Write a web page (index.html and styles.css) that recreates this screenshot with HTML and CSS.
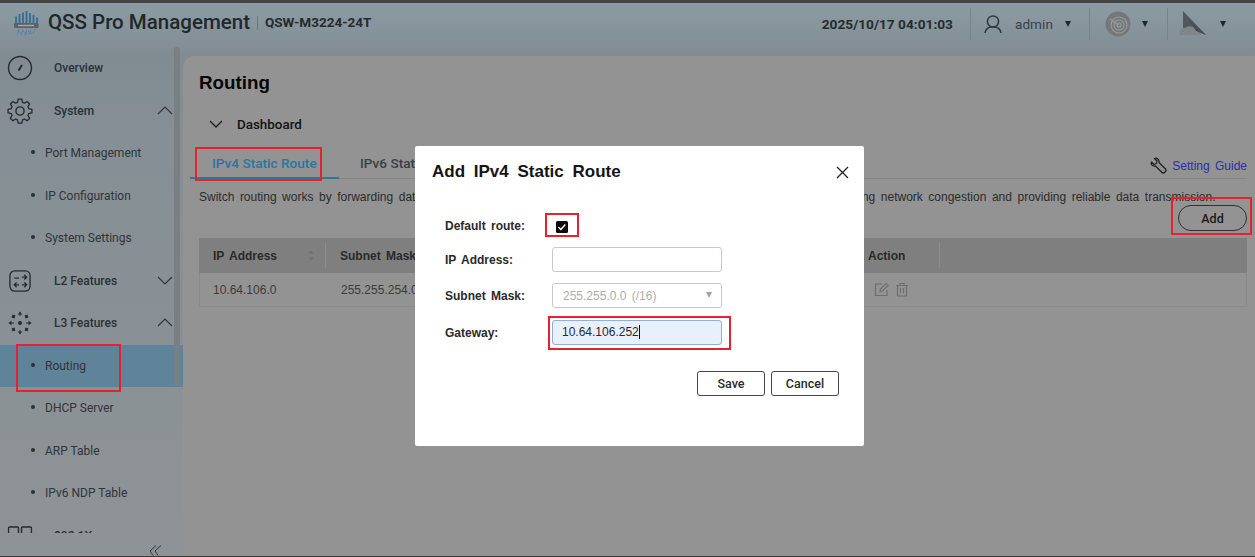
FILE: index.html
```html
<!DOCTYPE html>
<html lang="en">
<head>
<meta charset="utf-8">
<title>QSS Pro Management</title>
<link rel="stylesheet" href="styles.css">
</head>
<body>
<div class="strip"></div>
<header class="topbar">
  <svg class="logo" width="26" height="26" viewBox="0 0 26 26">
    <g stroke="#2c6c95" stroke-width="1.700">
      <path d="M3 6.500V14M6.500 4V14M10 2.500V14M13.500 1V14M17 3V14M20.500 5V14M24 7.500V14"/>
    </g>
    <rect x="1" y="13" width="24.500" height="5" rx="1.200" fill="#5b6367"/>
    <rect x="5" y="14.800" width="16" height="1.400" fill="#a3a9ac"/>
    <path d="M6 19.500l-2 5M10 19.500l-2 6M14 19.500l-2 6M18 19.500l-2 5M22 19.500l-2 4M5 21l4 3M10 21l4 3M15 21l4 3" stroke="#4a83ab" stroke-width=".9"/>
  </svg>
  <span class="brand">QSS Pro Management</span>
  <span class="brand-sep"></span>
  <span class="model">QSW-M3224-24T</span>
  <div class="top-right">
    <span class="clock">2025/10/17 04:01:03</span>
    <span class="top-sep"></span>
    <svg class="user-icon" width="20" height="20" viewBox="0 0 20 20" fill="none" stroke="#30373c" stroke-width="1.500">
      <circle cx="10" cy="7.500" r="5.600"/>
      <path d="M2 19c.6-4 3.400-6.200 8-6.200s7.400 2.200 8 6.200"/>
    </svg>
    <span class="admin">admin</span>
    <span class="caret caret-a"></span>
    <span class="top-sep"></span>
    <svg class="radar" width="26" height="26" viewBox="0 0 26 26">
      <circle cx="13" cy="13" r="12.500" fill="#74787a"/>
      <g fill="none" stroke="#9a9c9c" stroke-width="1.100">
        <circle cx="14" cy="14" r="8"/>
        <circle cx="14" cy="14" r="5"/>
        <circle cx="14" cy="14" r="2"/>
        <path d="M5 8l9 6"/>
      </g>
    </svg>
    <span class="caret caret-b"></span>
    <span class="top-sep"></span>
    <svg class="sail" width="28" height="26" viewBox="0 0 28 26">
      <path d="M4 0L27 24 12 17 4 17z" fill="#50585d"/>
      <path d="M1 24c-2-4 1-8 5-7 3-3 9-2 11 1 3 0 5 3 5 6z" fill="#7f8589"/>
      <path d="M10 9L27 24 17 20z" fill="#454c50"/>
    </svg>
    <span class="caret caret-c"></span>
  </div>
</header>
<div class="shell">
  <aside class="sidebar">
    <nav class="nav">
      <a class="nav-item">
        <svg class="nav-icon" width="26" height="26" viewBox="0 0 26 26" fill="none" stroke="#262b2e" stroke-width="1.400">
          <circle cx="13" cy="13" r="11.500"/>
          <path d="M11.500 15.500L15 10" stroke-width="2"/>
        </svg>
        <span>Overview</span>
      </a>
      <a class="nav-item">
        <svg class="nav-icon" width="28" height="28" viewBox="0 0 24 24" fill="none" stroke="#262b2e" stroke-width="1.200" stroke-linejoin="round">
          <circle cx="12" cy="12" r="3.500"/>
          <path d="M10.300 2.500h3.400l.6 2.900 1.800.8 2.500-1.600 2.400 2.400-1.600 2.500.8 1.800 2.900.6v3.400l-2.900.6-.8 1.800 1.600 2.500-2.400 2.400-2.500-1.600-1.800.8-.6 2.900h-3.400l-.6-2.900-1.800-.8-2.500 1.600-2.400-2.400 1.600-2.500-.8-1.800-2.900-.6v-3.400l2.900-.6.800-1.800-1.600-2.500 2.400-2.400 2.500 1.600 1.800-.8z" transform="translate(12 12) scale(.92) translate(-12 -13.500)"/>
        </svg>
        <span>System</span>
        <svg class="chev" width="16" height="9" viewBox="0 0 16 9" fill="none" stroke="#30363a" stroke-width="1.200"><path d="M1 8l7-7 7 7"/></svg>
      </a>
      <a class="nav-sub">Port Management</a>
      <a class="nav-sub">IP Configuration</a>
      <a class="nav-sub">System Settings</a>
      <a class="nav-item">
        <svg class="nav-icon" width="23" height="23" viewBox="0 0 24 24" fill="none" stroke="#262b2e" stroke-width="1.400">
          <rect x="1.500" y="1.500" width="21" height="21" rx="5"/>
          <path d="M6 9h5M14 8h5M16.500 5.500l2.500 2.500-2.500 2.500M6 16h5M8.500 13.500L6 16l2.500 2.500M14 16h5M16.500 13.500l2.500 2.500-2.500 2.500" stroke-width="1.300"/>
        </svg>
        <span>L2 Features</span>
        <svg class="chev" width="16" height="9" viewBox="0 0 16 9" fill="none" stroke="#30363a" stroke-width="1.200"><path d="M1 1l7 7 7-7"/></svg>
      </a>
      <a class="nav-item">
        <svg class="nav-icon" width="24" height="24" viewBox="0 0 24 24" fill="#262b2e">
          <circle cx="12" cy="12" r="2"/>
          <path d="M12 .5l2.200 3h-4.400zM12 23.500l-2.200-3h4.400zM.5 12l3-2.200v4.400zM23.500 12l-3 2.200V9.800z"/>
          <rect x="4" y="4" width="3" height="3" transform="rotate(20 5.500 5.500)"/>
          <rect x="17" y="4" width="3" height="3" transform="rotate(-20 18.500 5.500)"/>
          <rect x="4" y="17" width="3" height="3" transform="rotate(-20 5.500 18.500)"/>
          <rect x="17" y="17" width="3" height="3" transform="rotate(20 18.500 18.500)"/>
          <path d="M3 12h3M18 12h3M12 3v2M12 19v2" stroke="#262b2e"/>
        </svg>
        <span>L3 Features</span>
        <svg class="chev" width="16" height="9" viewBox="0 0 16 9" fill="none" stroke="#30363a" stroke-width="1.200"><path d="M1 8l7-7 7 7"/></svg>
      </a>
      <a class="nav-sub is-active">Routing</a>
      <a class="nav-sub">DHCP Server</a>
      <a class="nav-sub">ARP Table</a>
      <a class="nav-sub">IPv6 NDP Table</a>
      <a class="nav-item">
        <svg class="nav-icon" width="25" height="20" viewBox="0 0 25 20" fill="none" stroke="#262b2e" stroke-width="1.400">
          <rect x="1" y="1" width="10" height="16" rx="1"/>
          <rect x="14" y="1" width="10" height="16" rx="1"/>
        </svg>
        <span>802.1X</span>
      </a>
    </nav>
    <div class="scroll-thumb"></div>
    <div class="collapse">
      <svg width="13" height="11" viewBox="0 0 13 11" fill="none" stroke="#30363a" stroke-width="1"><path d="M7 .5L1 6l3 4.500M12 .5L6 6l3 4.500"/></svg>
    </div>
  </aside>
  <main class="panel">
    <h1 class="page-title">Routing</h1>
    <div class="dash">
      <svg width="14" height="8" viewBox="0 0 14 8" fill="none" stroke="#1c1c1c" stroke-width="1.300"><path d="M1 1l6 6 6-6"/></svg>
      <span>Dashboard</span>
    </div>
    <div class="tabs">
      <span class="tab is-on">IPv4 Static Route</span>
      <span class="tab">IPv6 Static Route</span>
      <span class="guide">
        <svg width="17" height="17" viewBox="0 0 17 17" fill="none" stroke="#1c1c1c" stroke-width="1.200" stroke-linejoin="round"><path d="M1.500 5L4 7.500 6.500 6.500 7 4 4.500 1.500C7 .5 9.500 2.500 9 5.500L15.500 12C16.500 13 15.500 14.500 15 15 14.500 15.500 13 16.500 12 15.500L5.500 9C2.500 9.500 .5 7.500 1.500 5Z"/></svg>
        <span class="guide-text">Setting Guide</span>
      </span>
    </div>
    <p class="desc">Switch routing works by forwarding data packets between different network segments, improving network speed, reducing network congestion and providing reliable data transmission.</p>
    <div class="actions"><button class="add-btn">Add</button></div>
    <div class="table">
      <div class="thead">
        <span class="cell c-ip">IP Address<svg class="sort" width="6" height="11" viewBox="0 0 6 11" fill="#6f6f6f"><path d="M3 0l2.500 3.500h-5zM3 11L.5 7.500h5z"/></svg></span>
        <span class="cell c-mask">Subnet Mask</span>
        <span class="cell c-gw">Gateway</span>
        <span class="cell c-act">Action</span>
        <span class="cell c-end"></span>
      </div>
      <div class="trow">
        <span class="cell c-ip">10.64.106.0</span>
        <span class="cell c-mask">255.255.254.0</span>
        <span class="cell c-gw">10.64.106.1</span>
        <span class="cell c-act">
          <svg width="15" height="15" viewBox="0 0 15 15" fill="none" stroke="#6e6e6e" stroke-width="1.200"><path d="M13 8v5.500H1.500V2H8M6 9.500l.5-2.500L12 1.500l2 2L8.500 9z"/></svg>
          <svg width="14" height="15" viewBox="0 0 14 15" fill="none" stroke="#6e6e6e" stroke-width="1.200"><path d="M1 3.500h12M5 3V1.500h4V3M2.500 3.500V14h9V3.500M5.500 6v5M8.500 6v5"/></svg>
        </span>
        <span class="cell c-end"></span>
      </div>
    </div>
  </main>
</div>
<section class="modal">
  <div class="modal-head">
    <h2 class="modal-title">Add IPv4 Static Route</h2>
    <svg width="13" height="13" viewBox="0 0 13 13" fill="none" stroke="#222" stroke-width="1.300"><path d="M1 1l11 11M12 1L1 12"/></svg>
  </div>
  <div class="form">
    <label class="f-label">Default route:</label>
    <span class="checkbox">
      <svg width="12" height="12" viewBox="0 0 12 12"><rect width="12" height="12" rx="1.500" fill="#0b0b0b"/><path d="M2.500 6.200l2.400 2.300 4.400-5" fill="none" stroke="#fff" stroke-width="1.500"/></svg>
    </span>
    <label class="f-label">IP Address:</label>
    <span class="field"></span>
    <label class="f-label">Subnet Mask:</label>
    <span class="field is-select">255.255.0.0 (/16)<i class="sel-caret"></i></span>
    <label class="f-label">Gateway:</label>
    <span class="field is-focus">10.64.106.252<i class="text-cursor"></i></span>
  </div>
  <div class="modal-foot">
    <button class="m-btn">Save</button>
    <button class="m-btn">Cancel</button>
  </div>
</section>
<div class="mark mark-tab"></div>
<div class="mark mark-nav"></div>
<div class="mark mark-add"></div>
<div class="mark mark-check"></div>
<div class="mark mark-gw"></div>
</body>
</html>
```

FILE: styles.css
```css
* { box-sizing: border-box; }
html, body { margin: 0; height: 100%; }
body {
  width: 1255px;
  height: 557px;
  overflow: hidden;
  position: relative;
  display: flex;
  flex-direction: column;
  font-family: Roboto, "Liberation Sans", sans-serif;
  color: #262b2e;
  background: linear-gradient(180deg, #8d9ca5 0, #818c92 55px, #858f95 130px, #8e9396 557px);
  border-bottom: 1px solid #3c3c3c;
}
.strip { height: 3px; background: #444; flex: none; }

/* header */
.topbar { height: 44px; flex: none; display: flex; align-items: center; padding: 0 0 6px 13px; }
.logo { flex: none; margin-top: 2px; }
.brand { margin-left: 9px; font-size: 20.500px; font-weight: 500; color: #21272b; white-space: nowrap; }
.brand-sep { width: 1px; height: 14px; background: #6d7980; margin: 2px 7px 0 7px; }
.model { font-size: 13.500px; font-weight: 700; color: #262b2e; white-space: nowrap; }
.top-right { margin-left: auto; display: flex; align-items: center; height: 32px; margin-top: 4px; }
.clock { font-size: 13.700px; font-weight: 700; color: #262b2e; margin-right: 17px; white-space: nowrap; }
.top-sep { width: 1px; height: 32px; background: #76838b; }
.user-icon { margin-left: 12px; }
.admin { margin-left: 12px; font-size: 13.500px; color: #3a4146; letter-spacing: .1px; }
.caret { width: 0; height: 0; border-left: 3.500px solid transparent; border-right: 3.500px solid transparent; border-top: 6px solid #20262a; }
.caret-a { margin: 0 18.500px 0 11.500px; }
.radar { margin-left: 15px; filter: blur(.6px); }
.caret-b { margin: 0 19.500px 0 10.500px; }
.sail { margin-left: 11px; }
.caret-c { margin: 0 29.500px 0 12.500px; }

/* shell */
.shell { flex: 1; min-height: 0; display: flex; }
.sidebar { width: 183px; flex: none; position: relative; display: flex; flex-direction: column; }
.nav { flex: 1; min-height: 0; overflow: hidden; display: grid; grid-auto-rows: 42.500px; align-content: start; }
.nav-item, .nav-sub { display: flex; align-items: center; font-size: 12px; font-weight: 500; color: #2b3135; white-space: nowrap; }
.nav-item { position: relative; padding-left: 54px; }
.nav-icon { position: absolute; left: 20px; top: 50%; transform: translate(-50%, -50%); }
.chev { position: absolute; left: 157px; top: 50%; margin-top: -5px; }
.nav-sub { padding-left: 45px; position: relative; font-weight: 400; color: #2f3539; }
.nav-sub::before { content: ""; position: absolute; left: 31px; top: 50%; width: 4px; height: 4px; margin-top: -3px; border-radius: 50%; background: #2b3135; }
.nav-sub.is-active { background: #5f8399; }
.scroll-thumb { position: absolute; left: 174px; top: 0; width: 6px; height: 339px; border-radius: 3px; background: #797f83; }
.collapse { height: 23px; flex: none; display: flex; align-items: flex-end; justify-content: flex-end; padding: 0 21px 0 0; }

/* panel */
.panel { flex: 1; min-width: 0; margin-top: 9px; background: #939393; border-top-left-radius: 12px; padding: 0 8px 0 16px; display: flex; flex-direction: column; }
.page-title { margin: 16px 0 0; font: 700 18.800px/22px "Liberation Sans", sans-serif; color: #050505; }
.dash { display: flex; align-items: center; gap: 14px; margin: 22px 0 0 10px; height: 16px; font-size: 13.400px; font-weight: 500; color: #121212; }
.tabs { margin: 17px 0 0 -9px; height: 30px; display: flex; align-items: center; border-bottom: 1px solid #868686; }
.tab { font-size: 13.600px; font-weight: 500; color: #3a3f42; padding-left: 21px; width: 170px; white-space: nowrap; height: 30px; line-height: 28px; overflow: hidden; }
.tab.is-on { color: #2a76a1; width: 149px; padding-left: 22px; border-bottom: 2px solid #2a76a1; }
.guide { margin: 4px 0 0 auto; display: flex; align-items: center; gap: 5px; }
.guide-text { font: 12px "Liberation Sans", sans-serif; word-spacing: 2px; color: #2a2fae; white-space: nowrap; }
.desc { margin: 11px 0 0; font: 12px/15px "Liberation Sans", sans-serif; word-spacing: 2.200px; color: #2b2b2b; white-space: nowrap; }
.actions { display: flex; justify-content: flex-end; height: 33px; }
.add-btn { width: 69px; height: 26px; border: 1px solid #303030; border-radius: 13px; background: transparent; font: 500 12.500px Roboto, sans-serif; color: #1a1a1a; padding: 0; }
.table { font: 12px "Liberation Sans", sans-serif; }
.thead, .trow { display: grid; grid-template-columns: 127px 200px 328px 86px 1fr; }
.thead { height: 35px; background: #7f7f7f; font-weight: 700; word-spacing: 2px; color: #2a2a2a; }
.trow { height: 34px; border: 1px solid #8a8a8a; border-top: 0; color: #3c3c3c; }
.cell { display: flex; align-items: center; padding-left: 14px; position: relative; white-space: nowrap; }
.trow .c-ip { padding-left: 13px; }
.thead .cell::after { content: ""; position: absolute; right: 0; top: 5px; bottom: 5px; width: 1px; background: #8d8d8d; }
.thead .c-end::after { display: none; }
.sort { position: absolute; right: 12px; top: 12px; }
.trow .c-act { gap: 6px; padding-left: 19px; }

/* modal */
.modal { position: absolute; left: 415px; top: 146px; width: 449px; height: 300px; background: #fff; border-radius: 2px; color: #1b1b1b; font-family: "Liberation Sans", sans-serif; }
.modal-head { display: flex; justify-content: space-between; align-items: center; padding: 14px 15px 0 17px; height: 38px; }
.modal-title { margin: 0; font-size: 17px; font-weight: 700; word-spacing: 4px; color: #151515; }
.form { margin: 30.500px 0 0 30px; display: grid; grid-template-columns: 107px 170px; grid-template-rows: 21px; grid-auto-rows: 25.300px; row-gap: 11.200px; align-items: center; }
.f-label { font-size: 12px; font-weight: 700; word-spacing: 2px; color: #2a2a2a; padding-top: 1px; }
.checkbox { display: block; height: 12px; margin: 3px 0 0 4px; line-height: 0; }
.field { display: flex; align-items: center; height: 100%; padding-left: 10px; border: 1px solid #c9c9c9; border-radius: 3px; background: #fff; font-size: 12px; color: #2a2a2a; position: relative; }
.field.is-select { color: #adadad; word-spacing: 2px; }
.sel-caret { position: absolute; right: 9px; top: 8px; border-left: 3.500px solid transparent; border-right: 3.500px solid transparent; border-top: 6px solid #a0a0a0; }
.field.is-focus { background: #e8f0fe; border-color: #8fb0d8; padding-left: 9px; }
.text-cursor { display: inline-block; width: 1px; height: 14px; background: #111; }
.modal-foot { display: flex; justify-content: flex-end; gap: 6px; margin: 26px 25px 0 0; }
.m-btn { width: 68px; height: 25px; padding: 0; border: 1px solid #444; border-radius: 3px; background: #fff; font: 500 12.500px Roboto, sans-serif; color: #2a2a2a; }

/* annotation boxes drawn over the screenshot */
.mark { position: absolute; border: 2px solid #e8212e; }
.mark-tab { left: 195px; top: 147px; width: 127px; height: 34px; }
.mark-nav { left: 16px; top: 344px; width: 105px; height: 48px; }
.mark-add { left: 1171px; top: 197px; width: 81px; height: 38px; }
.mark-check { left: 545px; top: 213px; width: 34px; height: 24px; }
.mark-gw { left: 548px; top: 316px; width: 183px; height: 34px; }
```
